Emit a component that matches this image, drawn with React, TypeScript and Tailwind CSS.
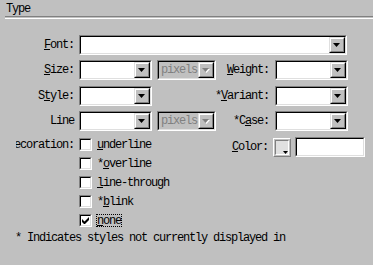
import type { ReactNode } from 'react'

function Arrow({ disabled }: { disabled?: boolean }) {
  return (
    <svg width="8" height="5" viewBox="0 0 8 5" className="block">
      {disabled && <polygon points="1,1 8,1 4.5,5" fill="#ffffff" />}
      <polygon points="0,0 7,0 3.5,4" fill={disabled ? '#808080' : '#000000'} />
    </svg>
  )
}

function DropButton({ disabled }: { disabled?: boolean }) {
  return (
    <div className="flex w-[16px] border border-t-[#dfdfdf] border-l-[#dfdfdf] border-b-black border-r-black bg-[#c0c0c0]">
      <div className="flex flex-1 items-center justify-center border border-t-white border-l-white border-b-[#808080] border-r-[#808080]">
        <Arrow disabled={disabled} />
      </div>
    </div>
  )
}

function Sunken({ className, inner, children }: { className: string; inner: string; children?: ReactNode }) {
  return (
    <div className={`flex border border-t-[#808080] border-l-[#808080] border-b-white border-r-white ${className}`}>
      <div className={`flex flex-1 border border-t-black border-l-black border-b-[#dfdfdf] border-r-[#dfdfdf] ${inner}`}>{children}</div>
    </div>
  )
}

function Select({ width, value, disabled }: { width: string; value?: string; disabled?: boolean }) {
  return (
    <Sunken className={`h-[20px] ${width}`} inner={disabled ? 'bg-[#c0c0c0]' : 'bg-white'}>
      <span className="flex flex-1 items-center pl-[2px] text-[#808080]">{value}</span>
      <DropButton disabled={disabled} />
    </Sunken>
  )
}

function Label({ width, children }: { width: string; children: ReactNode }) {
  return <span className={`flex shrink-0 justify-end ${width}`}>{children}</span>
}

function Check({ checked, label }: { checked?: boolean; label: ReactNode }) {
  return (
    <div className="flex h-[13px] items-center">
      <Sunken className="h-[13px] w-[13px]" inner="bg-white items-center justify-center">
        {checked && (
          <svg width="7" height="7" viewBox="0 0 7 7" className="block">
            <path d="M0 2v3l2 2h1l4-4V0L2.5 4.5z" fill="#000" />
          </svg>
        )}
      </Sunken>
      <span className={`ml-[4px] flex h-[13px] items-center px-[1px] ${checked ? 'outline outline-1 outline-dotted outline-black -outline-offset-1' : ''}`}>
        {label}
      </span>
    </div>
  )
}

export default function App() {
  return (
    <div className="h-[265px] w-[373px] overflow-hidden bg-[#c0c0c0] font-['Liberation_Mono','DejaVu_Sans_Mono',monospace] text-[12px] leading-[12px] tracking-[-1.2px] text-black">
      <div className="h-[16px] pl-[6px] pt-[3px]">Type</div>
      <div className="ml-[5px] h-[3px] border-t border-b border-t-[#808080] border-b-white" />

      <div className="mt-[16px] flex h-[20px] items-center">
        <Label width="w-[74px]">
          <u>F</u>ont:
        </Label>
        <div className="ml-[5px] flex h-[20px]">
          <Sunken className="h-[20px] w-[268px]" inner="bg-white justify-end">
            <DropButton />
          </Sunken>
        </div>
      </div>

      <div className="mt-[5px] flex h-[20px] items-center">
        <Label width="w-[74px]">
          <u>S</u>ize:
        </Label>
        <div className="ml-[5px]">
          <Select width="w-[73px]" />
        </div>
        <div className="ml-[5px]">
          <Select width="w-[59px]" value="pixels" disabled />
        </div>
        <Label width="w-[53px]">
          <u>W</u>eight:
        </Label>
        <div className="ml-[6px]">
          <Select width="w-[73px]" />
        </div>
      </div>

      <div className="mt-[6px] flex h-[20px] items-center">
        <Label width="w-[74px]">
          S<u>t</u>yle:
        </Label>
        <div className="ml-[5px]">
          <Select width="w-[73px]" />
        </div>
        <Label width="w-[117px]">
          *<u>V</u>ariant:
        </Label>
        <div className="ml-[6px]">
          <Select width="w-[73px]" />
        </div>
      </div>

      <div className="mt-[5px] flex h-[20px] items-center">
        <Label width="w-[74px]">Line</Label>
        <div className="ml-[5px]">
          <Select width="w-[73px]" />
        </div>
        <div className="ml-[5px]">
          <Select width="w-[59px]" value="pixels" disabled />
        </div>
        <Label width="w-[53px]">
          *C<u>a</u>se:
        </Label>
        <div className="ml-[6px]">
          <Select width="w-[73px]" />
        </div>
      </div>

      <div className="mt-[6px] flex items-start">
        <div className="ml-[16px] mt-[1px] flex h-[13px] w-[58px] items-center justify-end overflow-hidden whitespace-nowrap">
          Decoration:
        </div>
        <div className="ml-[5px] mt-[1px] flex w-[137px] flex-col gap-[6px]">
          <Check label={<><u>u</u>nderline</>} />
          <Check label={<>*<u>o</u>verline</>} />
          <Check label={<><u>l</u>ine-through</>} />
          <Check label={<>*<u>b</u>link</>} />
          <Check checked label={<><u>n</u>one</>} />
        </div>
        <div className="flex h-[20px] items-center">
          <Label width="w-[52px]">
            <u>C</u>olor:
          </Label>
          <div className="relative ml-[5px] flex h-[19px] w-[18px] border border-t-white border-l-white border-b-[#808080] border-r-[#808080] bg-[#c0c0c0]">
            <div className="m-[1px] flex-1 border border-t-[#808080] border-l-[#808080] border-b-white border-r-white bg-[#e0e0e0]" />
            <svg width="5" height="3" viewBox="0 0 5 3" className="absolute bottom-[2px] right-[2px]">
              <polygon points="0,0 5,0 2.5,3" fill="#000" />
            </svg>
          </div>
          <Sunken className="ml-[4px] h-[20px] w-[70px]" inner="bg-white" />
        </div>
      </div>

      <div className="mt-[5px] whitespace-nowrap pl-[15px]">* Indicates styles not currently displayed in</div>
    </div>
  )
}
